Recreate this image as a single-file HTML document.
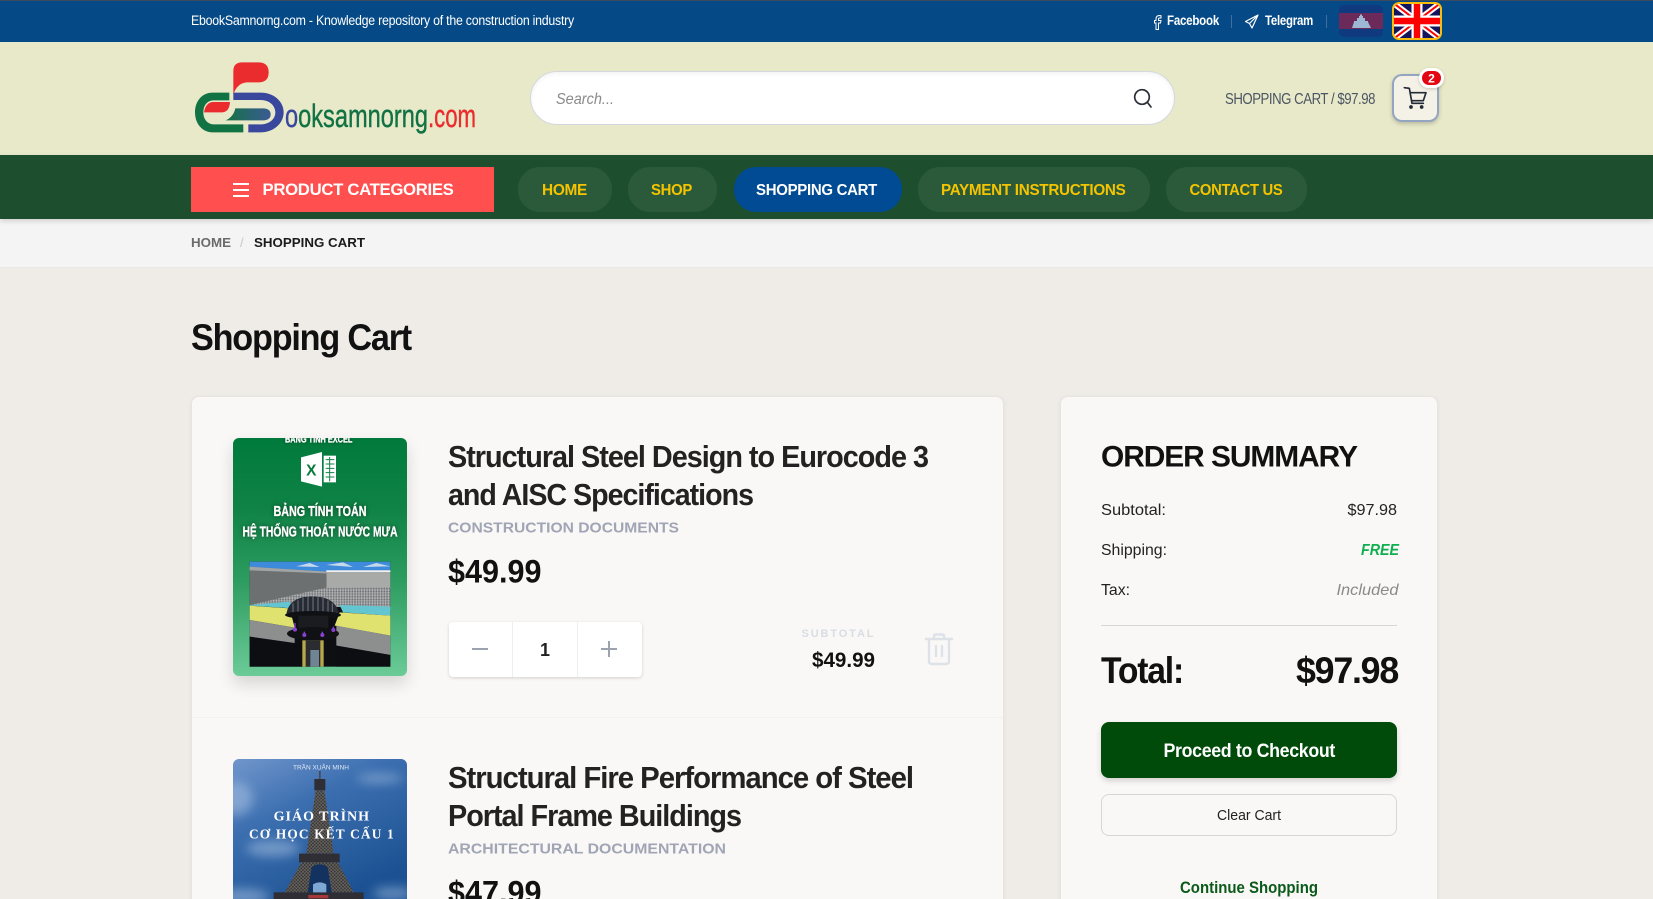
<!DOCTYPE html>
<html lang="en"><head><meta charset="utf-8"><title>Shopping Cart</title>
<style>
html,body{margin:0;padding:0;width:1653px;height:899px;overflow:hidden}
body{position:relative;background:#efece7;font-family:"Liberation Sans",sans-serif}
#p{position:absolute;left:0;top:0;width:1653px;height:899px;overflow:hidden}
.b{position:absolute;box-sizing:border-box}
svg{position:absolute;display:block;overflow:hidden}
text{font-family:"Liberation Sans",sans-serif;white-space:pre}
.tight{letter-spacing:-.035em}
.tgt{letter-spacing:-.02em}
.ye{font-weight:700;font-size:16px;fill:#f5c400;letter-spacing:-.02em}
</style></head><body><div id="p">
<div class="b" style="left:0;top:0;width:1653px;height:42px;background:#054a86;border-top:1px solid #3c4a5c"></div>
<div class="b" style="left:0;top:42px;width:1653px;height:113px;background:#e8e9c9"></div>
<div class="b" style="left:0;top:155px;width:1653px;height:64px;background:#1d4f2e;box-shadow:0 2px 5px rgba(0,0,0,.15);z-index:2"></div>
<div class="b" style="left:0;top:219px;width:1653px;height:49px;background:#f4f4f4;border-bottom:1px solid #ebe9e5"></div>

<div class="b" style="left:1231px;top:15px;width:1px;height:13px;background:#3d6f9f"></div>
<div class="b" style="left:1326px;top:15px;width:1px;height:13px;background:#3d6f9f"></div>

<svg style="left:1339px;top:5px" width="44" height="32" viewBox="0 0 44 32"><rect width="44" height="32" rx="5" fill="#0f3a80"/><rect y="8" width="44" height="16" fill="#6b2a5a"/><path d="M13 23 15 17V16H18V13H20V11H21V9.500H23V11H24V13H26V16H29V17L32 23Z" fill="#9db8d4"/></svg>
<svg style="left:1392px;top:2px" width="50" height="38" viewBox="0 0 50 38"><defs><clipPath id="uk"><rect x="1" y="1" width="48" height="36" rx="6"/></clipPath></defs><g clip-path="url(#uk)"><rect width="50" height="38" fill="#15155c"/><path d="M0 0 50 38M50 0 0 38" stroke="#fff" stroke-width="6"/><path d="M0 0 50 38M50 0 0 38" stroke="#f00" stroke-width="2"/><path d="M25 0V38M0 19H50" stroke="#fff" stroke-width="11"/><path d="M25 0V38M0 19H50" stroke="#f00" stroke-width="6.500"/></g><rect x="1" y="1" width="48" height="36" rx="6" fill="none" stroke="#f8bd0c" stroke-width="2"/></svg>

<svg style="left:190px;top:55px" width="110" height="85" viewBox="0 0 330 255">
<defs><linearGradient id="lg" x1="0" x2="1"><stop offset="0" stop-color="#137245"/><stop offset="1" stop-color="#3c5a94"/></linearGradient></defs>
<path d="M130 118V48Q130 22 157 22H205Q236 22 236 52T205 82H170Q142 84 130 118Z" fill="#ea2c2e"/>
<path d="M118 113H68C35 113 15 140 15 172S35 232 68 232H160V208H72C52 208 40 192 40 172S50 138 68 136H118Z" fill="#117243"/>
<path d="M120 141H66Q46 145 42 172H98Q118 170 120 141Z" fill="#ea2c2e"/>
<path d="M130 113H212C252 113 281 140 281 172S252 232 212 232H175V208H212C238 208 256 192 256 172S238 135 212 135H130Z" fill="#39479c"/>
<path d="M107 196Q130 186 136 160H222Q242 162 242 178T222 196Z" fill="url(#lg)"/>
</svg>

<div class="b" style="left:530px;top:71px;width:645px;height:54px;background:#fff;border:1px solid #d4d8de;border-radius:27px;box-shadow:inset 0 2px 4px rgba(0,0,0,.05)"></div>
<svg style="left:1130px;top:86px" width="26" height="26" viewBox="0 0 26 26"><circle cx="12" cy="11" r="7.300" fill="none" stroke="#2a2f38" stroke-width="1.700"/><path d="M17.500 16.500 21 21" stroke="#2a2f38" stroke-width="1.700" stroke-linecap="round"/></svg>

<div class="b" style="left:1392px;top:74px;width:47px;height:48px;background:#f4f2e6;border:2px solid #93a5c1;border-radius:10px;box-shadow:0 2px 4px rgba(0,0,0,.2)"></div>
<svg style="left:1320px;top:60px" width="130" height="60" viewBox="0 180 390 180"><path d="M253 263 268 265 276 310H310M271 278H318L310 302H275" fill="none" stroke="#222a36" stroke-width="5" stroke-linejoin="round" stroke-linecap="round"/><circle cx="273" cy="321" r="5.500" fill="#222a36"/><circle cx="305" cy="321" r="5.500" fill="#222a36"/></svg>
<div class="b" style="left:1419px;top:68px;width:25px;height:20px;background:#e30613;border:3px solid #fff;border-radius:10px;box-shadow:0 1px 3px rgba(0,0,0,.2)"></div>

<div class="b" style="left:191px;top:167px;width:303px;height:45px;background:#ff4f4f;z-index:3"></div>
<div class="b" style="left:233px;top:183px;width:16px;height:2px;background:#fff;z-index:3"></div>
<div class="b" style="left:233px;top:189px;width:16px;height:2px;background:#fff;z-index:3"></div>
<div class="b" style="left:233px;top:195px;width:16px;height:2px;background:#fff;z-index:3"></div>
<div class="b" style="left:518px;top:167px;width:94px;height:45px;background:#2a5a3a;border-radius:22px;z-index:3"></div>
<div class="b" style="left:628px;top:167px;width:89px;height:45px;background:#2a5a3a;border-radius:22px;z-index:3"></div>
<div class="b" style="left:734px;top:167px;width:168px;height:45px;background:#004b93;border-radius:22px;z-index:3"></div>
<div class="b" style="left:918px;top:167px;width:232px;height:45px;background:#2a5a3a;border-radius:22px;z-index:3"></div>
<div class="b" style="left:1166px;top:167px;width:141px;height:45px;background:#2a5a3a;border-radius:22px;z-index:3"></div>

<div class="b" style="left:191px;top:396px;width:813px;height:520px;background:#faf8f6;border:1px solid #e8e5e0;border-radius:8px;box-shadow:0 1px 5px rgba(0,0,0,.06)"></div>
<div class="b" style="left:192px;top:717px;width:811px;height:1px;background:#f3f1ed"></div>
<div class="b" style="left:1060px;top:396px;width:378px;height:520px;background:#faf8f6;border:1px solid #e8e5e0;border-radius:8px;box-shadow:0 1px 5px rgba(0,0,0,.06)"></div>

<div class="b" style="left:233px;top:438px;width:174px;height:238px;border-radius:6px;box-shadow:0 8px 16px rgba(0,0,0,.14)"></div>
<svg style="left:233px;top:438px;border-radius:6px" width="174" height="238" viewBox="0 0 522 714">
<defs>
<linearGradient id="g1" x1="0" x2="0" y1="0" y2="1"><stop offset="0" stop-color="#007a3c"/><stop offset=".3" stop-color="#0f8345"/><stop offset=".6" stop-color="#2d9c60"/><stop offset="1" stop-color="#6bcb97"/></linearGradient>
<pattern id="grav" width="8" height="8" patternUnits="userSpaceOnUse"><rect width="8" height="8" fill="#8d8f92"/><circle cx="2" cy="2" r="1.600" fill="#c9cbcd"/><circle cx="6" cy="5" r="1.400" fill="#53565a"/><circle cx="2" cy="7" r="1" fill="#e2e3e4"/></pattern>
</defs>
<rect width="522" height="714" fill="url(#g1)"/>
<text x="257" y="14" text-anchor="middle" font-size="30" font-weight="700" fill="#fff" stroke="#fff" stroke-width="1" textLength="202" lengthAdjust="spacingAndGlyphs" style="filter:drop-shadow(0 0 5px rgba(0,0,0,.45))">BẢNG TÍNH EXCEL</text>
<path d="M204 58 267 42V146L204 130Z" fill="#fff"/><rect x="272" y="53" width="37" height="80" fill="#fff"/>
<path d="M278 65H304M278 78H304M278 91H304M278 104H304M278 117H304M290 57V130" stroke="#0f8345" stroke-width="3"/>
<text x="235" y="112" text-anchor="middle" font-size="48" font-weight="700" fill="#087a3c" textLength="31" lengthAdjust="spacingAndGlyphs">X</text>
<text x="261" y="234" text-anchor="middle" font-size="44" font-weight="700" fill="#fff" stroke="#fff" stroke-width="1" textLength="279" lengthAdjust="spacingAndGlyphs" style="filter:drop-shadow(0 0 6px rgba(0,0,0,.5))">BẢNG TÍNH TOÁN</text>
<text x="261" y="296" text-anchor="middle" font-size="44" font-weight="700" fill="#fff" stroke="#fff" stroke-width="1" textLength="465" lengthAdjust="spacingAndGlyphs" style="filter:drop-shadow(0 0 6px rgba(0,0,0,.5))">HỆ THỐNG THOÁT NƯỚC MƯA</text>
<g transform="translate(0,351)">
<rect x="50" y="20" width="422" height="315" fill="#0d0f12"/>
<rect x="50" y="20" width="422" height="30" fill="#3e8adb"/>
<path d="M190 34 230 24 260 36ZM280 30 330 22 360 36ZM390 36 430 24 472 34Z" fill="#c6d9ea"/>
<path d="M50 35 280 50V100L50 150Z" fill="#6d7070"/><path d="M50 35 280 50V55L50 46Z" fill="#a2a5a5"/>
<rect x="280" y="46" width="192" height="56" fill="#a7aaa6"/><rect x="280" y="46" width="192" height="5" fill="#f1f3f3"/>
<path d="M50 150 280 98 472 96V165L320 156 50 150Z" fill="url(#grav)"/>
<path d="M50 150 170 140 180 160 50 152ZM320 150 472 155V182L330 172Z" fill="#63c5cf"/>
<path d="M50 152 170 160 185 218 50 195ZM320 172 472 182V242L305 212Z" fill="#dfe26f"/>
<path d="M50 195 185 218V264L50 245ZM310 212 472 242V300L310 272Z" fill="#8c8f8e"/>
<path d="M50 245 210 270V335H50ZM310 272 472 300V335H310Z" fill="#0c0e12"/>
<path d="M160 178C165 140 195 124 238 124S312 140 318 178Z" fill="#262b33"/>
<path d="M180 145V176M195 136V176M210 129V176M225 125V176M240 124V176M255 125V176M270 129V176M285 136V176M298 145V176" stroke="#70767f" stroke-width="3"/>
<ellipse cx="240" cy="180" rx="84" ry="12" fill="#101114"/>
<rect x="196" y="182" width="90" height="58" fill="#1b1c1f"/>
<ellipse cx="240" cy="236" rx="78" ry="20" fill="#101114"/>
<rect x="208" y="256" width="64" height="79" fill="#b7a84b"/><rect x="218" y="256" width="44" height="79" fill="#2a2c2f"/><rect x="232" y="285" width="26" height="50" fill="#6f8594"/>
<g fill="#8a3fd6"><circle cx="186" cy="224" r="6"/><circle cx="214" cy="240" r="6"/><circle cx="268" cy="240" r="6"/><circle cx="301" cy="225" r="6"/><rect x="184" y="204" width="4" height="16"/><rect x="212" y="230" width="4" height="8"/><rect x="266" y="230" width="4" height="8"/><rect x="299" y="215" width="4" height="8"/></g>
</g>
</svg>

<svg style="left:233px;top:759px;border-radius:6px 6px 0 0" width="174" height="140" viewBox="0 12 522 420">
<defs>
<linearGradient id="g2" x1="0" x2=".6" y1="0" y2="1"><stop offset="0" stop-color="#7296cc"/><stop offset=".4" stop-color="#3c6fb0"/><stop offset="1" stop-color="#1c5293"/></linearGradient>
<filter id="bl"><feGaussianBlur stdDeviation="16"/></filter>
<pattern id="lat" width="10" height="10" patternUnits="userSpaceOnUse"><rect width="10" height="10" fill="#35343a"/><path d="M0 0 10 10M10 0 0 10" stroke="#7e7868" stroke-width="1.500"/></pattern>
</defs>
<rect y="12" width="522" height="420" fill="url(#g2)"/>
<g filter="url(#bl)" fill="#a9c2e2" opacity=".55"><ellipse cx="10" cy="130" rx="50" ry="50"/><ellipse cx="120" cy="280" rx="80" ry="24"/><ellipse cx="30" cy="425" rx="80" ry="24"/><ellipse cx="480" cy="415" rx="60" ry="18"/><ellipse cx="440" cy="70" rx="70" ry="14"/></g>
<rect x="258" y="48" width="5" height="24" fill="#4a4a50"/>
<rect x="244" y="72" width="33" height="34" fill="#2e2e34"/>
<path d="M248 106H274L302 296H220Z" fill="url(#lat)"/>
<rect x="198" y="296" width="122" height="26" fill="#2e2e34"/>
<path d="M205 322H315L362 412H155Z" fill="url(#lat)"/>
<rect x="122" y="412" width="270" height="20" fill="#2e2e34"/>
<path d="M236 336Q260 320 284 336L296 412H224Z" fill="#14325f"/><path d="M240 388Q260 376 280 388V412H240Z" fill="#7ea7d4"/>
<rect x="226" y="420" width="60" height="10" fill="#a63a3a"/>
<text x="264" y="44" text-anchor="middle" font-size="20" fill="#dfe8f5" textLength="168" lengthAdjust="spacingAndGlyphs">TRẦN XUÂN MINH</text>
<text x="265" y="196" text-anchor="middle" font-size="42" font-weight="700" fill="#fff" textLength="286" style="font-family:'Liberation Serif',serif">GIÁO TRÌNH</text>
<text x="265" y="251" text-anchor="middle" font-size="40" font-weight="700" fill="#fff" textLength="434" style="font-family:'Liberation Serif',serif">CƠ HỌC KẾT CẤU 1</text>
</svg>

<div class="b" style="left:448.500px;top:622px;width:193px;height:55px;background:#fff;border-radius:4px;box-shadow:0 1px 3px rgba(0,0,0,.16)"></div>
<div class="b" style="left:512px;top:622px;width:1px;height:55px;background:#eceef0"></div>
<div class="b" style="left:577px;top:622px;width:1px;height:55px;background:#eceef0"></div>
<div class="b" style="left:472px;top:648px;width:16px;height:2px;background:#9ca3af"></div>
<div class="b" style="left:601px;top:648px;width:16px;height:2px;background:#9ca3af"></div>
<div class="b" style="left:608px;top:641px;width:2px;height:16px;background:#9ca3af"></div>

<svg style="left:924px;top:632px" width="30" height="34" viewBox="0 0 30 34"><path d="M2 7H28M10 7V4Q10 2.500 12 2.500H18Q20 2.500 20 4V7M5 7V29Q5 32 8 32H22Q25 32 25 29V7M12 14V24M18 14V24" fill="none" stroke="#dde1e8" stroke-width="2.400" stroke-linecap="round"/></svg>

<div class="b" style="left:1101px;top:625px;width:296px;height:1px;background:#d9d7d2"></div>
<div class="b" style="left:1101px;top:722px;width:296px;height:56px;background:#004b0a;border-radius:8px;box-shadow:0 3px 6px rgba(0,0,0,.15)"></div>
<div class="b" style="left:1101px;top:794px;width:296px;height:42px;border:1px solid #d9d6d0;border-radius:8px"></div>

<svg style="left:0;top:0;z-index:5" width="1653" height="899" viewBox="0 0 1653 899">
<path d="M1159.500 15.500C1157 15.500 1156 17 1156 19V20.500H1154.500V23H1156V29.500H1158.500V23H1160.500L1161 20.500H1158.500V19C1158.500 18.300 1158.800 18 1159.500 18H1161V15.700Z" fill="none" stroke="#fff" stroke-width="1"/>
<path d="M1258 15 1245.500 21.500 1249.500 23.500 1252 28 1258 15ZM1258 15 1249.500 23.500" fill="none" stroke="#fff" stroke-width="1.200" stroke-linejoin="round"/>
<text x="191" y="25" font-size="13.500" fill="#fff" class="tgt" textLength="383" lengthAdjust="spacingAndGlyphs">EbookSamnorng.com - Knowledge repository of the construction industry</text>
<text x="1167" y="25" font-size="13.500" font-weight="700" fill="#fff" class="tgt" textLength="52" lengthAdjust="spacingAndGlyphs">Facebook</text>
<text x="1265" y="25" font-size="13.500" font-weight="700" fill="#fff" class="tgt" textLength="48" lengthAdjust="spacingAndGlyphs">Telegram</text>
<text x="285" y="127" font-size="32" fill="#117243" stroke="#117243" stroke-width=".4" textLength="143" lengthAdjust="spacingAndGlyphs"><tspan fill="#39479c" stroke="#39479c">o</tspan>oksamnorng</text>
<text x="428" y="127" font-size="32" fill="#ea2c2e" stroke="#ea2c2e" stroke-width=".4" textLength="48" lengthAdjust="spacingAndGlyphs">.com</text>
<text x="556" y="104" font-size="16" font-style="italic" fill="#8a8a8a" textLength="58" lengthAdjust="spacingAndGlyphs">Search...</text>
<text x="1225" y="104" font-size="15.500" fill="#4b5563" class="tight" textLength="150" lengthAdjust="spacingAndGlyphs">SHOPPING CART / $97.98</text>
<text x="1431.500" y="82.500" text-anchor="middle" font-size="12" font-weight="700" fill="#fff">2</text>
<text x="262.500" y="195" font-size="17" font-weight="700" fill="#fff" class="tgt" textLength="191" lengthAdjust="spacingAndGlyphs">PRODUCT CATEGORIES</text>
<text x="542" y="195" class="ye" textLength="45" lengthAdjust="spacingAndGlyphs">HOME</text>
<text x="651" y="195" class="ye" textLength="41" lengthAdjust="spacingAndGlyphs">SHOP</text>
<text x="756" y="195" class="ye" style="fill:#fff" textLength="121" lengthAdjust="spacingAndGlyphs">SHOPPING CART</text>
<text x="941" y="195" class="ye" textLength="184.500" lengthAdjust="spacingAndGlyphs">PAYMENT INSTRUCTIONS</text>
<text x="1189.500" y="195" class="ye" textLength="93" lengthAdjust="spacingAndGlyphs">CONTACT US</text>
<text x="191" y="247" font-size="13" font-weight="700" fill="#6b6b6b" textLength="40" lengthAdjust="spacingAndGlyphs">HOME</text>
<text x="240" y="247" font-size="13" fill="#c8c8c8">/</text>
<text x="254" y="247" font-size="13" font-weight="700" fill="#1a1a1a" textLength="111" lengthAdjust="spacingAndGlyphs">SHOPPING CART</text>
<text x="191" y="350" font-size="37" font-weight="700" fill="#111" class="tight" textLength="220" lengthAdjust="spacingAndGlyphs">Shopping Cart</text>

<text x="448" y="467" font-size="31" font-weight="700" fill="#222" class="tight" textLength="480" lengthAdjust="spacingAndGlyphs">Structural Steel Design to Eurocode 3</text>
<text x="448" y="505" font-size="31" font-weight="700" fill="#222" class="tight" textLength="305" lengthAdjust="spacingAndGlyphs">and AISC Specifications</text>
<text x="448" y="532.500" font-size="15" font-weight="700" fill="#a0a5b5" textLength="231" lengthAdjust="spacingAndGlyphs">CONSTRUCTION DOCUMENTS</text>
<text x="448" y="582.500" font-size="32" font-weight="700" fill="#111" textLength="93.500" lengthAdjust="spacingAndGlyphs">$49.99</text>
<text x="545" y="656" text-anchor="middle" font-size="18" font-weight="700" fill="#222">1</text>
<text x="801.500" y="637" font-size="11" font-weight="700" fill="#d8dce4" textLength="72">SUBTOTAL</text>
<text x="812" y="667" font-size="21" font-weight="700" fill="#111" textLength="63" lengthAdjust="spacingAndGlyphs">$49.99</text>

<text x="448" y="788" font-size="31" font-weight="700" fill="#222" class="tight" textLength="465" lengthAdjust="spacingAndGlyphs">Structural Fire Performance of Steel</text>
<text x="448" y="826" font-size="31" font-weight="700" fill="#222" class="tight" textLength="293" lengthAdjust="spacingAndGlyphs">Portal Frame Buildings</text>
<text x="448" y="853.500" font-size="15" font-weight="700" fill="#a0a5b5" textLength="278" lengthAdjust="spacingAndGlyphs">ARCHITECTURAL DOCUMENTATION</text>
<text x="448" y="903.500" font-size="32" font-weight="700" fill="#111" textLength="93.500" lengthAdjust="spacingAndGlyphs">$47.99</text>

<text x="1101" y="466.500" font-size="30" font-weight="700" fill="#111" class="tight" textLength="256" lengthAdjust="spacingAndGlyphs">ORDER SUMMARY</text>
<text x="1101" y="515" font-size="16" fill="#222" textLength="65" lengthAdjust="spacingAndGlyphs">Subtotal:</text>
<text x="1347.500" y="515" font-size="16" fill="#222" textLength="49.500" lengthAdjust="spacingAndGlyphs">$97.98</text>
<text x="1101" y="555" font-size="16" fill="#222" textLength="66" lengthAdjust="spacingAndGlyphs">Shipping:</text>
<text x="1361" y="555" font-size="16" font-weight="700" font-style="italic" fill="#0fae50" textLength="38" lengthAdjust="spacingAndGlyphs">FREE</text>
<text x="1101" y="595" font-size="16" fill="#222" textLength="29" lengthAdjust="spacingAndGlyphs">Tax:</text>
<text x="1336.500" y="595" font-size="16" font-style="italic" fill="#8a8a8a" textLength="62" lengthAdjust="spacingAndGlyphs">Included</text>
<text x="1101" y="683" font-size="37" font-weight="700" fill="#111" class="tight" textLength="82" lengthAdjust="spacingAndGlyphs">Total:</text>
<text x="1296" y="683" font-size="37" font-weight="700" fill="#111" class="tight" textLength="102" lengthAdjust="spacingAndGlyphs">$97.98</text>
<text x="1163.500" y="757" font-size="19" font-weight="700" fill="#fff" class="tgt" textLength="171.500" lengthAdjust="spacingAndGlyphs">Proceed to Checkout</text>
<text x="1217" y="820" font-size="15" fill="#222" textLength="64" lengthAdjust="spacingAndGlyphs">Clear Cart</text>
<text x="1180" y="893" font-size="16.500" font-weight="700" fill="#0b5a1a" textLength="138" lengthAdjust="spacingAndGlyphs">Continue Shopping</text>
</svg>
</div></body></html>
